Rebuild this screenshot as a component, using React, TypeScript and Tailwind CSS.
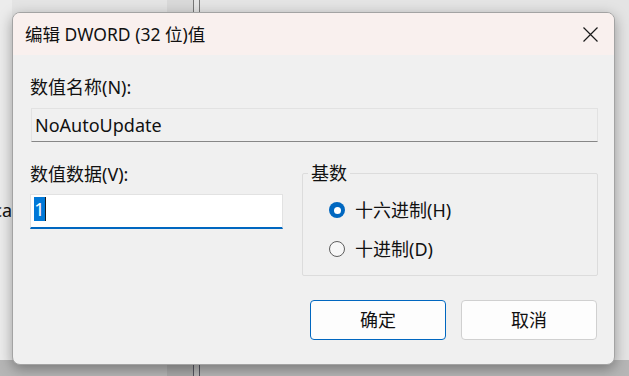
import React, { useState } from 'react';

const FONT = { fontFamily: '"Noto Sans", "Noto Sans CJK SC", sans-serif' };

// Windows 11 style radio button
const Radio: React.FC<{ checked: boolean; label: string; onClick: () => void }> = ({ checked, label, onClick }) => (
  <button onClick={onClick} className="flex items-center gap-[10px] h-[24px] text-[18px] leading-[24px] text-[#111]">
    {checked ? (
      <span className="w-[16px] h-[16px] rounded-full bg-[#0067c0] flex items-center justify-center">
        <span className="w-[7px] h-[7px] rounded-full bg-white" />
      </span>
    ) : (
      <span className="w-[16px] h-[16px] rounded-full border border-[#5e5e5e] bg-[#f7f7f7]" />
    )}
    <span>{label}</span>
  </button>
);

export default function App() {
  const [hex, setHex] = useState(true);

  return (
    <div className="relative w-[629px] h-[376px] overflow-hidden bg-[#e4e4e4]" style={FONT}>
      {/* bits of the window behind */}
      <div className="absolute left-[167px] top-0 w-[26px] h-[12px] bg-[#d9d9d9]" />
      <div className="absolute left-[193px] top-0 w-px h-[12px] bg-[#777]" />
      <div className="absolute left-[199px] top-0 w-px h-[12px] bg-[#777]" />
      <div className="absolute left-0 top-[360px] w-[629px] h-[16px] bg-[#b6b6b6]" />
      <div className="absolute left-[167px] top-[360px] w-[26px] h-[16px] bg-[#a9a9a9]" />
      <div className="absolute left-[193px] top-[360px] w-px h-[16px] bg-[#55555f]" />
      <div className="absolute left-[199px] top-[360px] w-px h-[16px] bg-[#55555f]" />
      <div className="absolute left-0 top-0 w-[12px] h-[360px] bg-[#ececec]" />
      <span className="absolute right-[617px] top-[198px] text-[18px] leading-[24px] text-[#111]">ca</span>

      {/* dialog */}
      <div className="absolute left-[12px] top-[12px] w-[603px] h-[353px] rounded-[8px] border border-[#a3a3a3] bg-[#f0f0f0] shadow-[0_4px_14px_rgba(0,0,0,0.35)] flex flex-col overflow-hidden">
        <div className="h-[42px] shrink-0 bg-[#f9f0ee] flex items-center justify-between pl-[12px] pr-[16px]">
          <span className="text-[17.5px] leading-[24px] text-[#111]">编辑 DWORD (32 位)值</span>
          <svg width="15" height="15" viewBox="0 0 15 15" className="mt-[1px]">
            <path d="M0.5 0.5 L14.5 14.5 M14.5 0.5 L0.5 14.5" stroke="#1a1a1a" strokeWidth="1.2" fill="none" />
          </svg>
        </div>

        <div className="flex flex-col pl-[17px] pr-[16px]">
          <label className="mt-[20px] text-[18px] leading-[24px] text-[#111]">数值名称(N):</label>
          <div className="mt-[9px] ml-[1px] h-[34px] w-[567px] border border-[#e2e2e2] border-b-[#878787] bg-[#f0f0f0] flex items-center pl-[3px] text-[18px] text-[#111]">
            NoAutoUpdate
          </div>

          <div className="flex mt-[20px]">
            <div className="flex flex-col w-[253px]">
              <label className="text-[18px] leading-[24px] text-[#111]">数值数据(V):</label>
              <div className="mt-[8px] h-[35px] bg-white border border-[#e2e2e2] border-b-2 border-b-[#0067c0] flex items-start pl-[3px] pt-[2px]">
                <span className="h-[24px] w-[11px] bg-[#0078d7] text-white text-[18px] leading-[24px] flex justify-center">1</span>
                <span className="h-[24px] w-px bg-[#1a1a1a]" />
              </div>
            </div>

            <div className="relative ml-[19px] mt-[11px] w-[296px] h-[103px] border border-[#dcdcdc] rounded-[2px]">
              <span className="absolute left-[5px] top-[-13px] px-[3px] bg-[#f0f0f0] text-[18px] leading-[24px] text-[#111]">基数</span>
              <div className="flex flex-col gap-[15px] pl-[26px] pt-[24px]">
                <Radio checked={hex} label="十六进制(H)" onClick={() => setHex(true)} />
                <Radio checked={!hex} label="十进制(D)" onClick={() => setHex(false)} />
              </div>
            </div>
          </div>

          <div className="flex justify-end gap-[15px] mt-[24px] pr-[1px]">
            <button className="w-[136px] h-[40px] rounded-[4px] border border-[#0067c0] bg-[#fdfdfd] text-[18px] text-[#111]">确定</button>
            <button className="w-[136px] h-[40px] rounded-[4px] border border-[#d0d0d0] bg-[#fdfdfd] text-[18px] text-[#111]">取消</button>
          </div>
        </div>
      </div>
    </div>
  );
}
